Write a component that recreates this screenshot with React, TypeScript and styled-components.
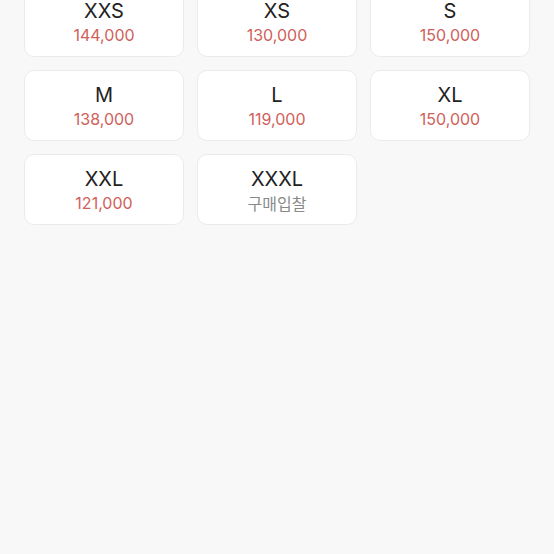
import styled, { createGlobalStyle } from 'styled-components'

const GlobalStyle = createGlobalStyle`
    html, body {
        margin: 0;
        padding: 0;
        background: #f8f8f8;
    }
    body {
        font-family: Inter, "Noto Sans CJK KR", sans-serif;
        overflow: hidden;
    }
`

const Page = styled.div`
    width: 554px;
    height: 554px;
    background: #f8f8f8;
    overflow: hidden;
`

const SizeGrid = styled.div`
    display: grid;
    grid-template-columns: repeat(3, 160px);
    column-gap: 13px;
    row-gap: 13px;
    padding: 0 24px;
    margin-top: -14px;
`

const SizeCard = styled.button`
    height: 71px;
    box-sizing: border-box;
    border: 1px solid #ebebeb;
    border-radius: 10px;
    background: #fff;
    display: flex;
    flex-direction: column;
    align-items: center;
    justify-content: center;
    padding: 2px 0 0;
    cursor: pointer;
    font-family: inherit;
`

const SizeLabel = styled.div`
    font-size: 20px;
    line-height: 24px;
    color: #222;
`

const PriceLabel = styled.div<{ empty?: boolean }>`
    font-size: 16px;
    line-height: 22px;
    margin-top: 1px;
    color: ${(props) => (props.empty ? '#8a8a8a' : '#d0605a')};
    font-family: ${(props) =>
        props.empty ? '"Noto Sans CJK KR", sans-serif' : 'inherit'};
`

const sizes = [
    { size: 'XXS', price: '144,000' },
    { size: 'XS', price: '130,000' },
    { size: 'S', price: '150,000' },
    { size: 'M', price: '138,000' },
    { size: 'L', price: '119,000' },
    { size: 'XL', price: '150,000' },
    { size: 'XXL', price: '121,000' },
    { size: 'XXXL', price: null },
]

function App() {
    return (
        <Page>
            <GlobalStyle />
            <SizeGrid>
                {sizes.map((item) => (
                    <SizeCard key={item.size} type="button">
                        <SizeLabel>{item.size}</SizeLabel>
                        <PriceLabel empty={!item.price}>
                            {item.price ?? '구매입찰'}
                        </PriceLabel>
                    </SizeCard>
                ))}
            </SizeGrid>
        </Page>
    )
}

export default App
